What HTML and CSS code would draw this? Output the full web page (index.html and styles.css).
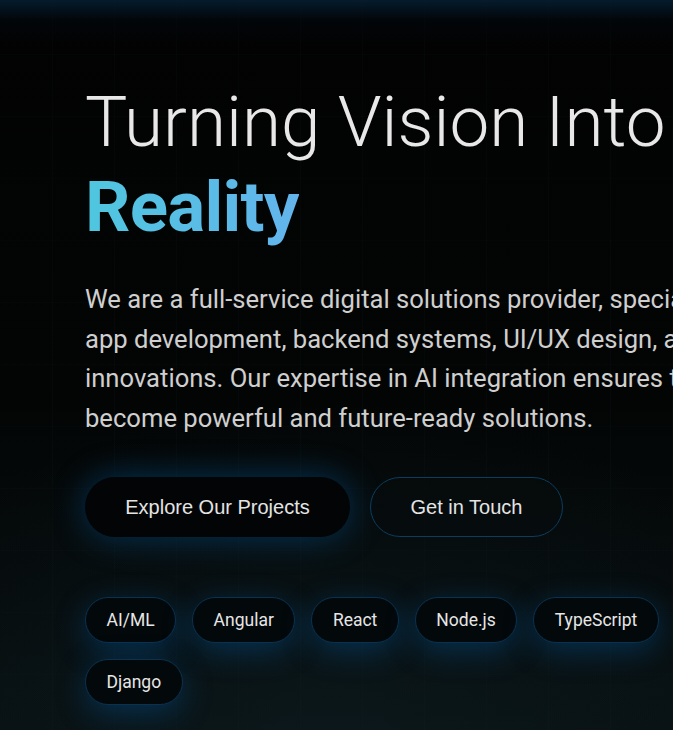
FILE: index.html
```html
<!DOCTYPE html>
<html lang="en">
<head>
<meta charset="utf-8">
<title>Turning Vision Into Reality</title>
<link rel="stylesheet" href="styles.css">
</head>
<body>
<section class="hero">
  <div class="hero-inner">
    <h1 class="title">Turning Vision Into <span class="accent">Reality</span></h1>
    <p class="lead">We are a full-service digital solutions provider, specializing in web and mobile<br>app development, backend systems, UI/UX design, and cutting-edge AI<br>innovations. Our expertise in AI integration ensures that your ideas<br>become powerful and future-ready solutions.</p>
    <div class="actions">
      <a class="btn btn-primary" href="#">Explore Our Projects</a>
      <a class="btn btn-outline" href="#">Get in Touch</a>
    </div>
    <ul class="tags">
      <li class="tag">AI/ML</li>
      <li class="tag">Angular</li>
      <li class="tag">React</li>
      <li class="tag">Node.js</li>
      <li class="tag">TypeScript</li>
      <li class="tag">Django</li>
    </ul>
  </div>
</section>
</body>
</html>
```
FILE: styles.css
```css
html, body {
  margin: 0;
  padding: 0;
  background: #020303;
  overflow: hidden;
}
body {
  font-family: Roboto, "Noto Sans", sans-serif;
  color: #e6e6e6;
  width: 673px;
  height: 730px;
}
.hero {
  position: relative;
  height: 730px;
  overflow: hidden;
  background:
    linear-gradient(to bottom, rgba(6, 30, 50, 0.9) 0px, rgba(2, 8, 14, 0.6) 20px, rgba(0, 0, 0, 0) 45px),
    radial-gradient(ellipse 520px 360px at 330px 760px, rgba(14, 30, 34, 0.55), rgba(0, 0, 0, 0) 100%),
    linear-gradient(to right, rgba(40, 60, 60, 0.07) 1px, transparent 1px) -10px 0 / 62px 62px,
    linear-gradient(to bottom, rgba(40, 60, 60, 0.045) 1px, transparent 1px) 0 -8px / 62px 62px,
    linear-gradient(to bottom, #020202 0%, #030505 55%, #081012 100%);
}
.hero-inner {
  width: 1000px;
  padding: 79px 0 0 85px;
}
.title {
  margin: 0;
  font-size: 71px;
  line-height: 85px;
  font-weight: 300;
  color: #e8e8e8;
}
.accent {
  display: block;
  font-weight: 700;
  letter-spacing: -0.8px;
  background: linear-gradient(90deg, #4fc6df 0px, #63b4ec 215px);
  -webkit-background-clip: text;
  background-clip: text;
  color: transparent;
  width: max-content;
}
.lead {
  margin: 31px 0 0;
  font-size: 25.6px;
  line-height: 39.6px;
  color: #cfcfcf;
  font-weight: 400;
  white-space: nowrap;
}
.actions {
  display: flex;
  gap: 20px;
  margin-top: 39px;
}
.btn {
  display: inline-flex;
  align-items: center;
  justify-content: center;
  height: 60px;
  box-sizing: border-box;
  border-radius: 30px;
  font-family: "Liberation Sans", Arial, sans-serif;
  font-size: 20px;
  color: #e4e4e4;
  text-decoration: none;
}
.btn-primary {
  width: 265px;
  background: #020405;
  box-shadow: 0 0 34px rgba(0, 110, 190, 0.42);
}
.btn-outline {
  width: 193px;
  background: rgba(6, 12, 14, 0.6);
  border: 1px solid #0b3d5e;
}
.tags {
  list-style: none;
  margin: 60px 0 0;
  padding: 0;
  width: 590px;
  display: flex;
  flex-wrap: wrap;
  column-gap: 16px;
  row-gap: 16px;
}
.tag {
  height: 46px;
  box-sizing: border-box;
  padding: 0 20.5px;
  display: inline-flex;
  align-items: center;
  border-radius: 23px;
  border: 1px solid #0b3150;
  background: #03080a;
  font-size: 17.5px;
  font-weight: 400;
  color: #e6e6e6;
  box-shadow: 0 8px 30px rgba(0, 100, 180, 0.36);
}
```
